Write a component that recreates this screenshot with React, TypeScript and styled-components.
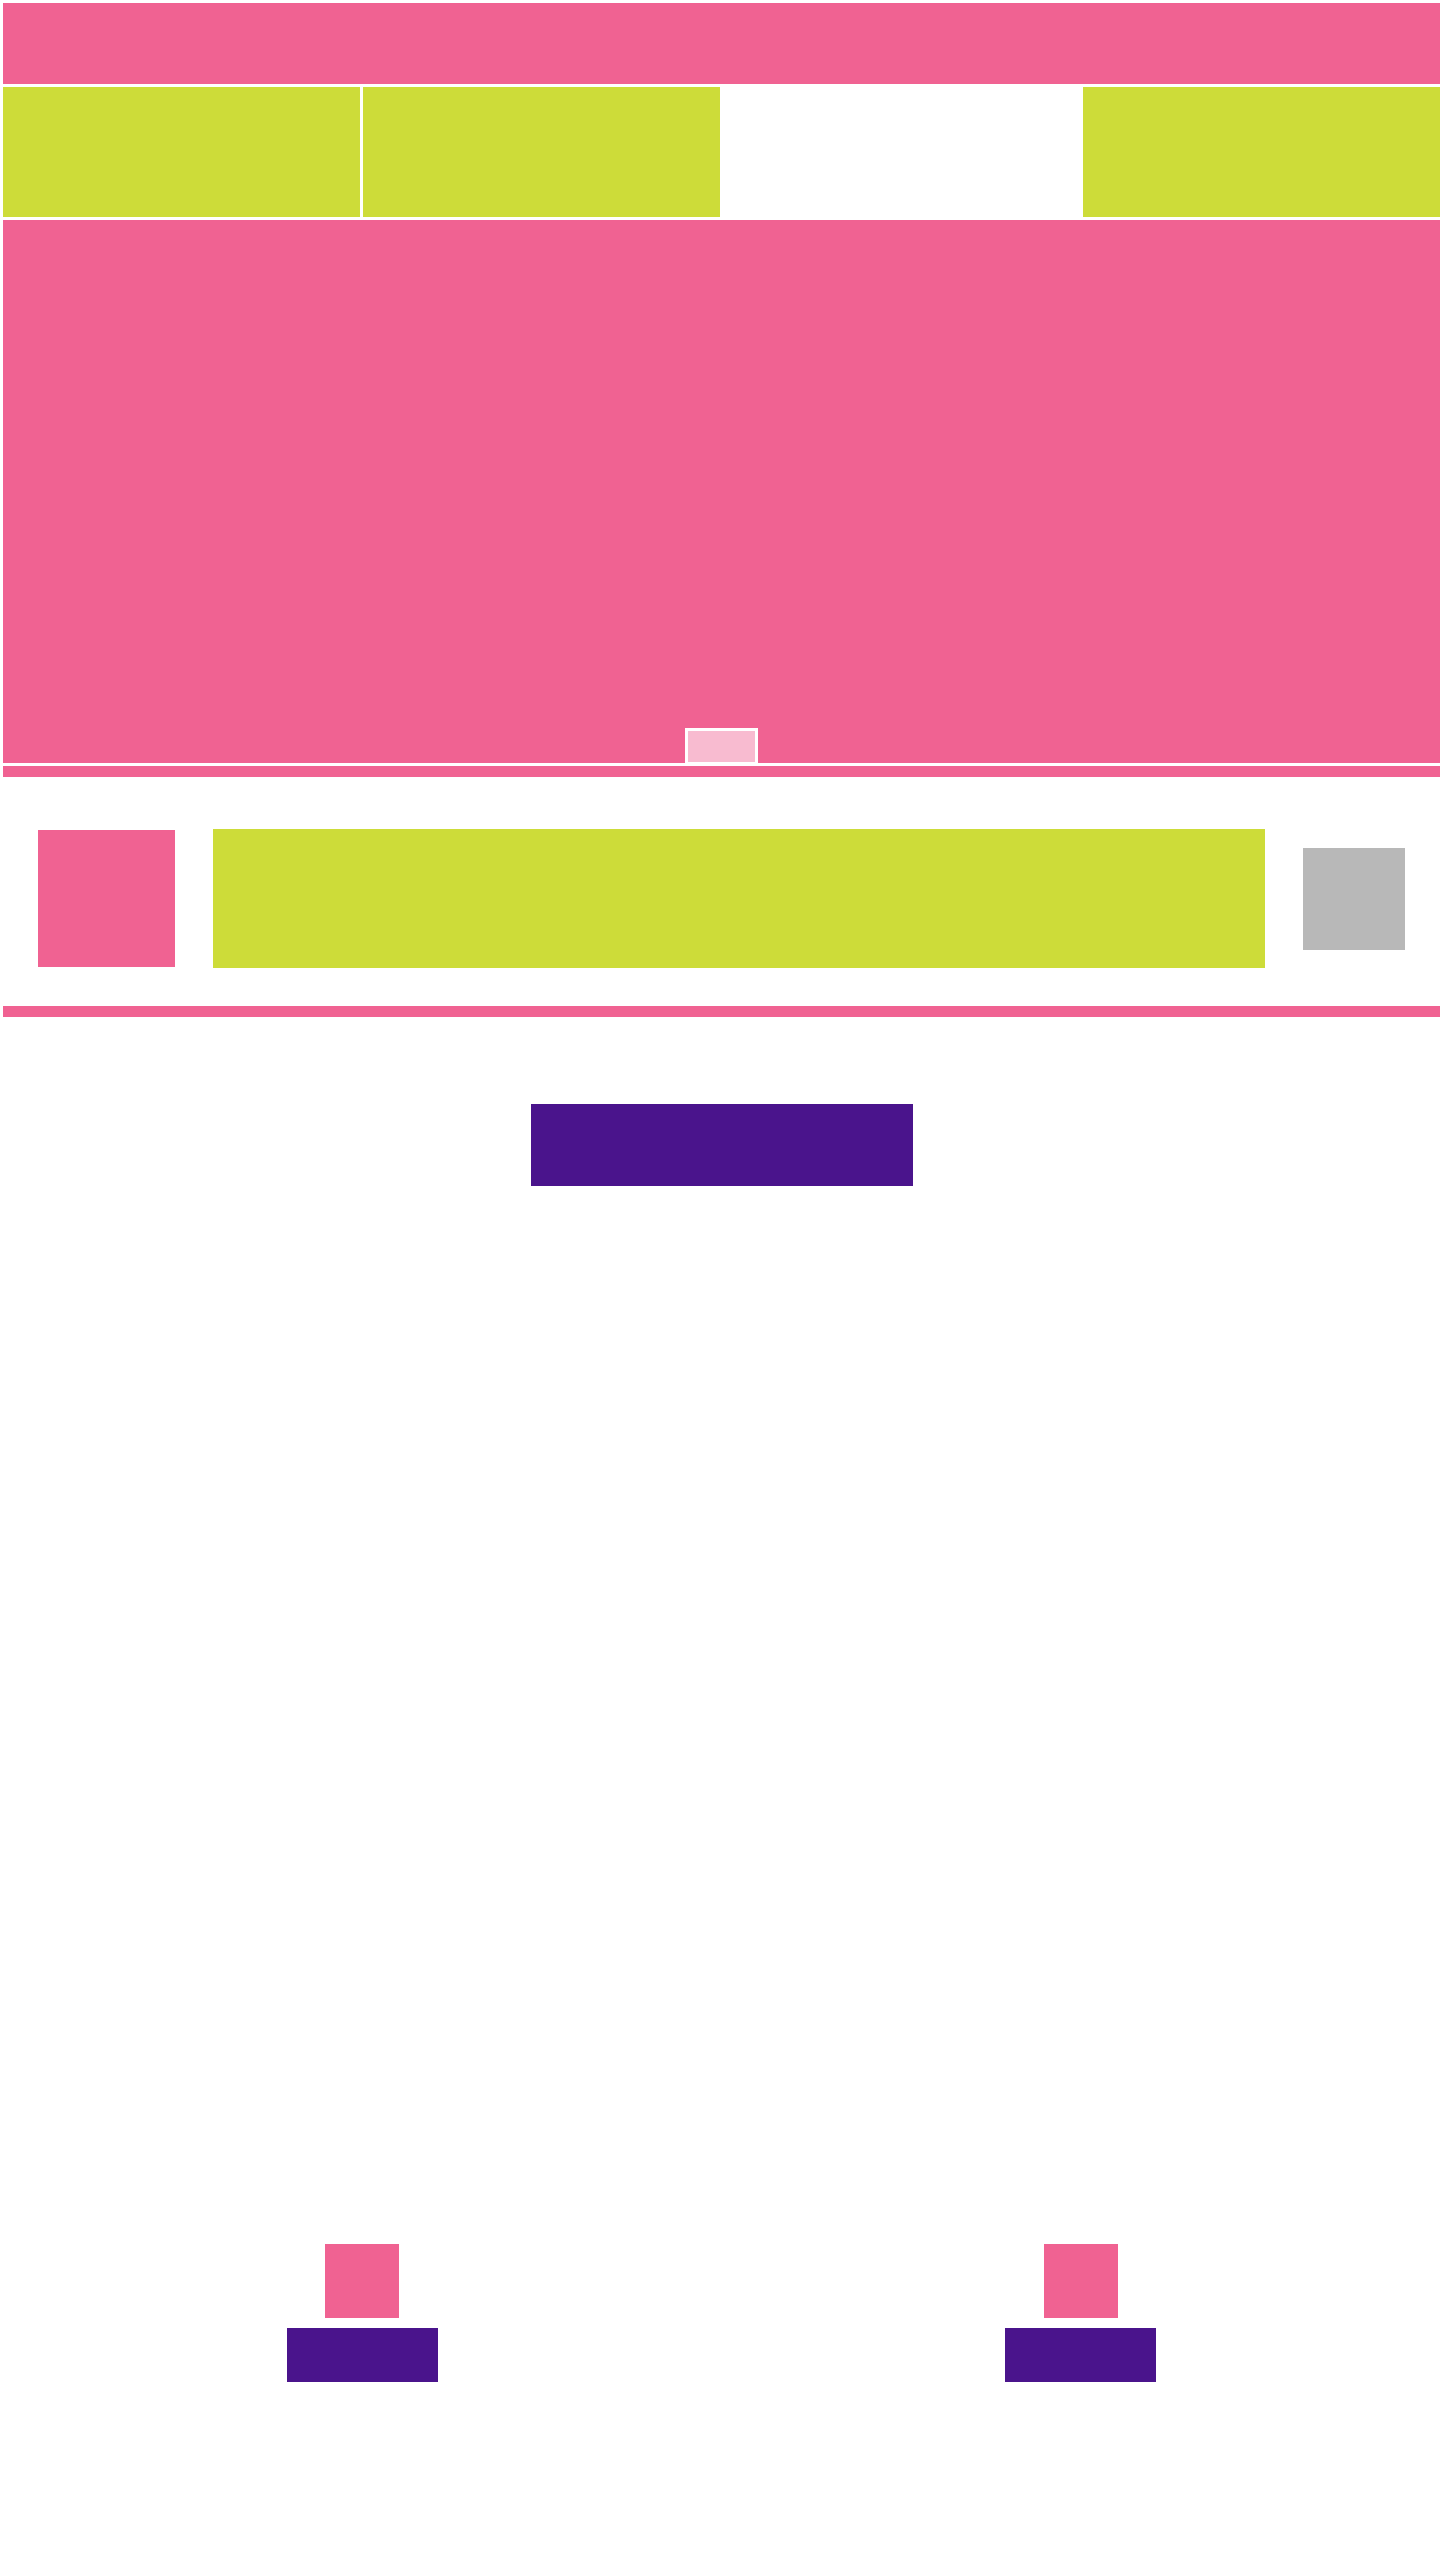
import React from "react";
import styled, { createGlobalStyle } from "styled-components";

const PINK = "#f06292";
const LIME = "#cddc39";
const PURPLE = "#4a148c";
const LIGHT_PINK = "#f8bbd0";
const GRAY = "#b8b8b8";

const GlobalStyle = createGlobalStyle`
  html, body {
    margin: 0;
    padding: 0;
    background: #ffffff;
    font-family: "Liberation Sans", Arial, sans-serif;
  }
`;

const Page = styled.div`
  width: 1440px;
  min-height: 2560px;
  box-sizing: border-box;
  padding: 3px 0 0 3px;
  display: flex;
  flex-direction: column;
  background: #ffffff;
`;

const TopStack = styled.div`
  display: flex;
  flex-direction: column;
  gap: 3px;
`;

const Header = styled.header`
  height: 81px;
  background: ${PINK};
`;

const NavGrid = styled.nav`
  display: grid;
  grid-template-columns: repeat(4, 1fr);
  gap: 3px;
  height: 130px;
`;

const NavCell = styled.div<{ $empty?: boolean }>`
  background: ${(p) => (p.$empty ? "transparent" : LIME)};
`;

const Hero = styled.section`
  height: 543px;
  background: ${PINK};
  display: flex;
  flex-direction: column;
  justify-content: flex-end;
  align-items: center;
`;

const Indicator = styled.div`
  width: 73px;
  height: 35px;
  box-sizing: border-box;
  border: 3px solid #ffffff;
  border-bottom-width: 1px;
  background: ${LIGHT_PINK};
`;

const Divider = styled.div`
  height: 11px;
  background: ${PINK};
`;

const FeatureRow = styled.section`
  display: flex;
  align-items: center;
  gap: 38px;
  padding: 52px 35px 38px 35px;
`;

const Thumb = styled.div`
  width: 137px;
  height: 137px;
  flex-shrink: 0;
  background: ${PINK};
`;

const FeatureBody = styled.div`
  flex: 1;
  height: 139px;
  background: ${LIME};
`;

const ActionBox = styled.div`
  width: 102px;
  height: 102px;
  flex-shrink: 0;
  background: ${GRAY};
`;

const CtaSection = styled.section`
  display: flex;
  justify-content: center;
  padding-top: 87px;
`;

const CtaButton = styled.button`
  width: 382px;
  height: 82px;
  border: none;
  padding: 0;
  background: ${PURPLE};
`;

const Footer = styled.footer`
  display: grid;
  grid-template-columns: 1fr 1fr;
  margin-top: 1058px;
`;

const FooterColumn = styled.div`
  display: flex;
  flex-direction: column;
  align-items: center;
  gap: 10px;
`;

const FooterIcon = styled.div`
  width: 74px;
  height: 74px;
  background: ${PINK};
`;

const FooterButton = styled.button`
  width: 151px;
  height: 54px;
  border: none;
  padding: 0;
  background: ${PURPLE};
`;

export default function App() {
  const navItems = [false, false, true, false];
  return (
    <>
      <GlobalStyle />
      <Page>
        <TopStack>
          <Header />
          <NavGrid>
            {navItems.map((empty, i) => (
              <NavCell key={i} $empty={empty} />
            ))}
          </NavGrid>
          <Hero>
            <Indicator />
          </Hero>
          <Divider />
        </TopStack>
        <FeatureRow>
          <Thumb />
          <FeatureBody />
          <ActionBox />
        </FeatureRow>
        <Divider />
        <CtaSection>
          <CtaButton aria-label="call to action" />
        </CtaSection>
        <Footer>
          <FooterColumn>
            <FooterIcon />
            <FooterButton aria-label="left action" />
          </FooterColumn>
          <FooterColumn>
            <FooterIcon />
            <FooterButton aria-label="right action" />
          </FooterColumn>
        </Footer>
      </Page>
    </>
  );
}
